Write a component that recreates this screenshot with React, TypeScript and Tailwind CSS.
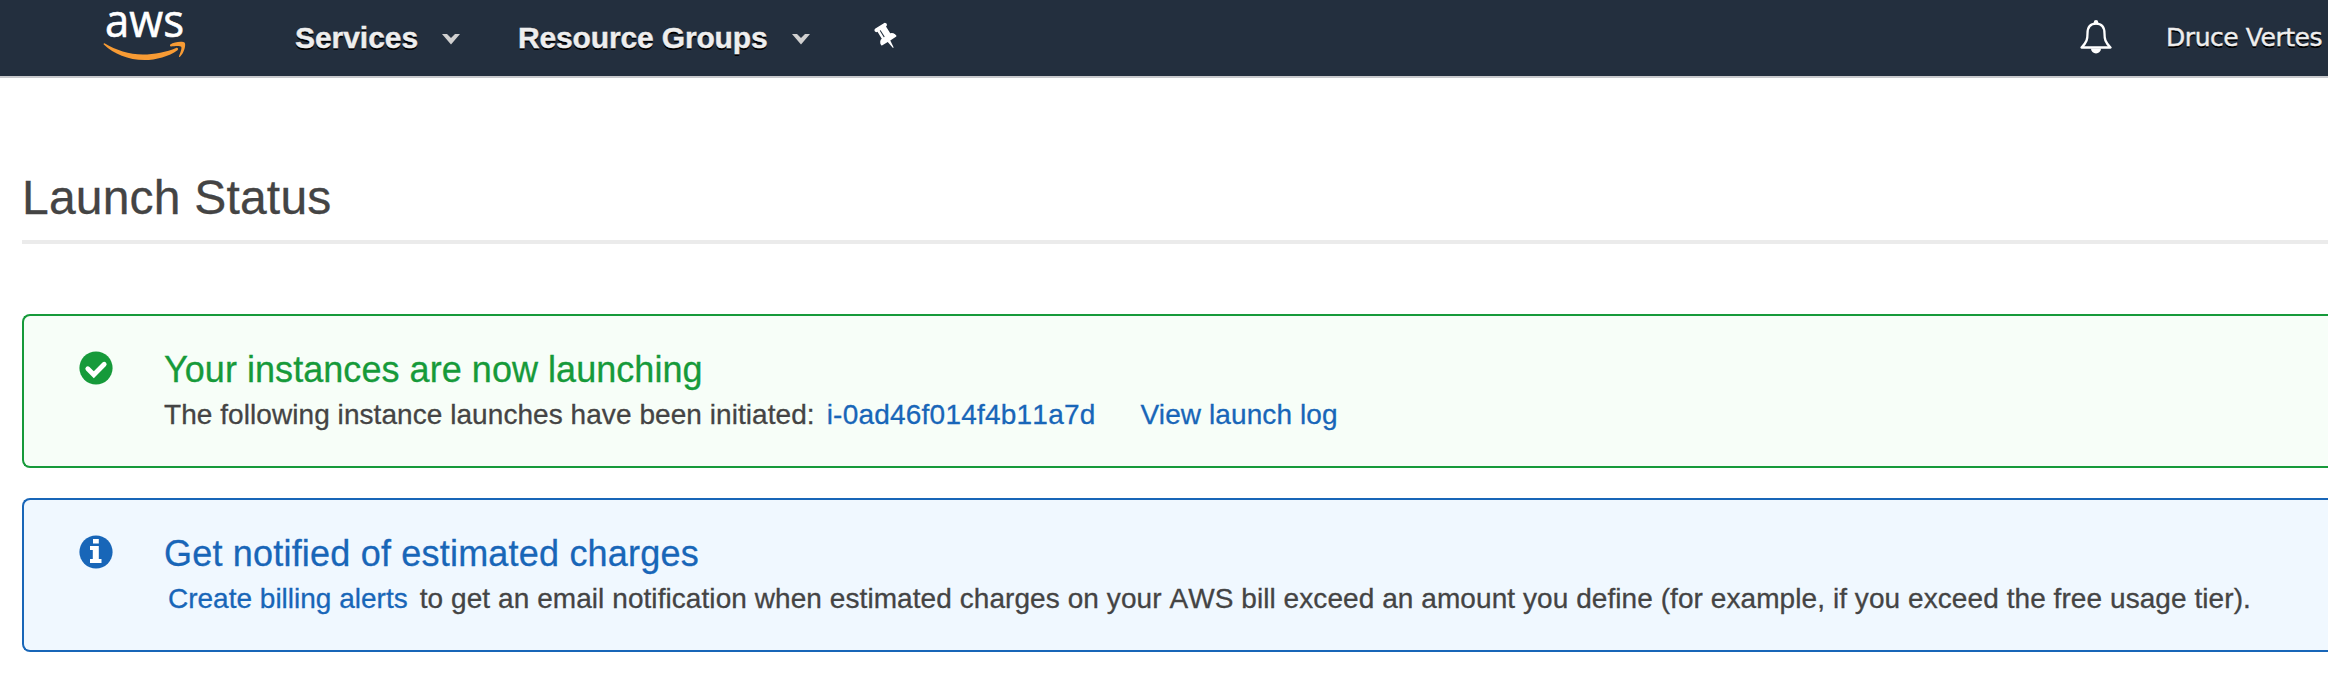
import type { ReactNode } from "react";

function Logo() {
  return (
    <svg width="84" height="52" viewBox="0 0 84 52" className="block overflow-visible [text-shadow:none]">
      <text x="2" y="26.8" fill="#fff" stroke="#fff" strokeWidth="0.6" fontFamily="'Open Sans', sans-serif" fontWeight="500" fontSize="45" textLength="79" lengthAdjust="spacingAndGlyphs">aws</text>
      <path d="M1.500 33.200C13 40 26 44.500 40 44.500c11 0 24-2.500 33-6.500 1.600-.6 3 1 1.500 2.200C66 46.500 53 50 41.500 50 25 50 11 44 .8 34.500c-.6-.6 0-1.600.7-1.300Z" fill="#f79b34" />
      <path d="M67.300 34.500c4-2.900 13-3.400 14.400-1.700 1.400 1.700-.4 10.200-4.700 13.900-.7.5-1.300.2-1-.5 1-2.500 3.200-8 2.200-9.400-1-1.300-7-.6-10.200-.3-.9.1-1.400-1.400-.7-2Z" fill="#f79b34" />
    </svg>
  );
}

function Chevron() {
  return (
    <svg width="18" height="11" viewBox="0 0 18 11" className="block">
      <path d="M0 0h5l4 4L13 0h5L9 10.500Z" fill="#d0d0d0" />
    </svg>
  );
}

function Pin() {
  return (
    <svg width="28" height="28" viewBox="0 0 1792 1792" className="-rotate-[32deg]" fill="#fff">
      <path d="M800 864v-448q0-14-9-23t-23-9-23 9-9 23v448q0 14 9 23t23 9 23-9 9-23zm672 352q0 26-19 45t-45 19h-429l-51 483q-2 12-10.500 20.500t-20.500 8.500h-1q-27 0-32-27l-76-485h-404q-26 0-45-19t-19-45q0-123 78.500-221.500t177.500-98.500v-512q-52 0-90-38t-38-90 38-90 90-38h640q52 0 90 38t38 90-38 90-90 38v512q99 0 177.500 98.500t78.500 221.500z" />
    </svg>
  );
}

function Bell() {
  return (
    <svg width="32" height="34" viewBox="0 0 32 34" className="block" fill="none" stroke="#fff">
      <circle cx="16" cy="2.2" r="2.2" fill="#fff" stroke="none" />
      <path d="M1.500 27.500C7 22 7.500 19 7.500 13.500 7.500 7 10.500 3.700 16 3.700s8.500 3.300 8.500 9.800c0 5.500.5 8.500 6 14Z" strokeWidth="2.300" strokeLinejoin="round" />
      <path d="M11 28.500h10a5 5 0 0 1-10 0Z" fill="#fff" stroke="none" />
    </svg>
  );
}

function CheckIcon() {
  return (
    <svg width="34" height="34" viewBox="0 0 34 34" className="block">
      <circle cx="17" cy="17" r="16.600" fill="#169a3a" />
      <path d="M8.800 17.800l6 6L25.200 13.300" fill="none" stroke="#fff" strokeWidth="4.800" strokeLinecap="round" strokeLinejoin="miter" />
    </svg>
  );
}

function InfoIcon() {
  return (
    <svg width="34" height="34" viewBox="0 0 34 34" className="block">
      <circle cx="17" cy="17" r="16.600" fill="#1866b8" />
      <path d="M14 4h5.800v4.600h-5.800ZM11 11h8.800v13h2.700v4H11v-4h2.800v-9H11Z" fill="#fff" />
    </svg>
  );
}

function Alert({ tone, icon, title, children }: { tone: string; icon: ReactNode; title: ReactNode; children: ReactNode }) {
  return (
    <section className={`flex h-[154px] rounded-l-[8px] border-2 border-r-0 pl-[55px] ${tone}`}>
      <div className="mt-[35px] w-[85px] shrink-0">{icon}</div>
      <div className="whitespace-nowrap [-webkit-text-stroke-width:0.3px]">
        <h2 className="mt-[33px] text-[36px] leading-[42px]">{title}</h2>
        <p className="mt-[6px] text-[28px] leading-[36px] text-[#444]">{children}</p>
      </div>
    </section>
  );
}

export default function App() {
  return (
    <div className="h-[684px] w-full overflow-hidden bg-white font-['Liberation_Sans',sans-serif] text-[#444]">
      <header className="flex h-[78px] border-b-2 border-[#c8c9cd] bg-[#232f3e] text-[#eee] [text-shadow:0_2px_0_#000]">
        <div className="ml-[103px] w-[192px] pt-[10px]"><Logo /></div>
        <div className="flex w-[223px] pt-[20px] text-[30px] leading-[36px] font-bold tracking-[-0.05px]">
          <span className="w-[147px] [-webkit-text-stroke-width:0.4px]">Services</span>
          <span className="pt-[14px]"><Chevron /></span>
        </div>
        <div className="flex w-[354px] pt-[20px] text-[30px] leading-[36px] font-bold tracking-[-0.15px]">
          <span className="w-[274px] whitespace-nowrap [-webkit-text-stroke-width:0.4px]">Resource Groups</span>
          <span className="pt-[14px]"><Chevron /></span>
        </div>
        <div className="pt-[22px]"><Pin /></div>
        <div className="ml-auto flex">
          <div className="mr-[54px] pt-[20px]"><Bell /></div>
          <span className="w-[162px] pt-[21px] font-['DejaVu_Sans',sans-serif] text-[25px] leading-[34px] tracking-[-0.45px] whitespace-nowrap [-webkit-text-stroke:0.4px_#eee]">Druce Vertes</span>
        </div>
      </header>
      <main className="pl-[22px]">
        <h1 className="h-[166px] border-b-4 border-[#ebebeb] pt-[92px] text-[48px] leading-[56px] tracking-[0.2px] [-webkit-text-stroke-width:0.3px]">Launch Status</h1>
        <div className="mt-[70px] flex flex-col gap-[30px]">
          <Alert
            tone="border-[#169a3a] bg-[#f7fef8] text-[#169a3a]"
            icon={<CheckIcon />}
            title={<span className="tracking-[0.05px]">Your instances are now launching</span>}
          >
            <span className="tracking-[0.06px]">The following instance launches have been initiated:</span>
            <a className="ml-[12px] tracking-[0.22px] text-[#1866b8] [font-kerning:none]">i-0ad46f014f4b11a7d</a>
            <a className="ml-[45px] tracking-[0.1px] text-[#1866b8]">View launch log</a>
          </Alert>
          <Alert
            tone="border-[#1866b8] bg-[#f0f8ff] text-[#1866b8]"
            icon={<InfoIcon />}
            title={<span className="tracking-[0.2px]">Get notified of estimated charges</span>}
          >
            <a className="mr-[12px] ml-[4px] text-[#1866b8]">Create billing alerts</a>
            <span className="tracking-[0.07px] [font-kerning:none]">
              to get an email notification when estimated charges on your AWS bill exceed an amount you define (for example, if you exceed the free usage tier).
            </span>
          </Alert>
        </div>
      </main>
    </div>
  );
}
